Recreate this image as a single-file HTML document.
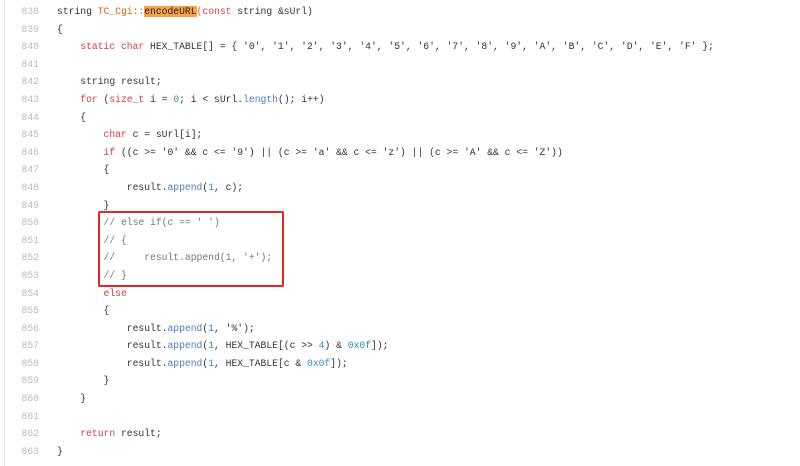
<!DOCTYPE html>
<html><head><meta charset="utf-8"><style>
body{margin:0;background:#fff;width:800px;height:466px;overflow:hidden;position:relative}
.bl{position:absolute;left:4px;top:0;width:1px;height:466px;background:#e5e5e5}
.c{position:absolute;top:3px;left:0;font-family:"Liberation Mono",monospace;font-size:9.7px;color:#333}
.l{height:17.6px;line-height:17.6px;white-space:pre;position:relative}
.n{position:absolute;left:0;width:39px;text-align:right;color:#bbb}
.t{position:absolute;left:57px}
.k{color:#d73a49}.f{color:#4a7cc7}.s{color:#333}.m{color:#2f8fc7}.o{color:#e36209}.g{color:#777}
.hl{background:#f7a24a;color:#222}
.box{position:absolute;left:98px;top:211px;width:182px;height:72px;border:2px solid #e0262b;border-radius:2px}
</style></head><body>
<div class="bl"></div>
<div class="c">
<div class="l"><span class="n">838</span><span class="t">string <span class="o">TC_Cgi::</span><span class="hl">encodeURL</span><span class="o">(</span><span class="k">const</span> string &amp;sUrl)</span></div>
<div class="l"><span class="n">839</span><span class="t">{</span></div>
<div class="l"><span class="n">840</span><span class="t">    <span class="k">static char</span> HEX_TABLE[] = { '0', '1', '2', '3', '4', '5', '6', '7', '8', '9', 'A', 'B', 'C', 'D', 'E', 'F' };</span></div>
<div class="l"><span class="n">841</span><span class="t"></span></div>
<div class="l"><span class="n">842</span><span class="t">    string result;</span></div>
<div class="l"><span class="n">843</span><span class="t">    <span class="k">for</span> (<span class="k">size_t</span> i = <span class="m">0</span>; i &lt; sUrl.<span class="f">length</span>(); i++)</span></div>
<div class="l"><span class="n">844</span><span class="t">    {</span></div>
<div class="l"><span class="n">845</span><span class="t">        <span class="k">char</span> c = sUrl[i];</span></div>
<div class="l"><span class="n">846</span><span class="t">        <span class="k">if</span> ((c &gt;= '0' &amp;&amp; c &lt;= '9') || (c &gt;= 'a' &amp;&amp; c &lt;= 'z') || (c &gt;= 'A' &amp;&amp; c &lt;= 'Z'))</span></div>
<div class="l"><span class="n">847</span><span class="t">        {</span></div>
<div class="l"><span class="n">848</span><span class="t">            result.<span class="f">append</span>(<span class="m">1</span>, c);</span></div>
<div class="l"><span class="n">849</span><span class="t">        }</span></div>
<div class="l"><span class="n">850</span><span class="t g">        // else if(c == ' ')</span></div>
<div class="l"><span class="n">851</span><span class="t g">        // {</span></div>
<div class="l"><span class="n">852</span><span class="t g">        //     result.append(1, '+');</span></div>
<div class="l"><span class="n">853</span><span class="t g">        // }</span></div>
<div class="l"><span class="n">854</span><span class="t">        <span class="k">else</span></span></div>
<div class="l"><span class="n">855</span><span class="t">        {</span></div>
<div class="l"><span class="n">856</span><span class="t">            result.<span class="f">append</span>(<span class="m">1</span>, '%');</span></div>
<div class="l"><span class="n">857</span><span class="t">            result.<span class="f">append</span>(<span class="m">1</span>, HEX_TABLE[(c &gt;&gt; <span class="m">4</span>) &amp; <span class="m">0x0f</span>]);</span></div>
<div class="l"><span class="n">858</span><span class="t">            result.<span class="f">append</span>(<span class="m">1</span>, HEX_TABLE[c &amp; <span class="m">0x0f</span>]);</span></div>
<div class="l"><span class="n">859</span><span class="t">        }</span></div>
<div class="l"><span class="n">860</span><span class="t">    }</span></div>
<div class="l"><span class="n">861</span><span class="t"></span></div>
<div class="l"><span class="n">862</span><span class="t">    <span class="k">return</span> result;</span></div>
<div class="l"><span class="n">863</span><span class="t">}</span></div>
</div>
<div class="box"></div>
</body></html>
